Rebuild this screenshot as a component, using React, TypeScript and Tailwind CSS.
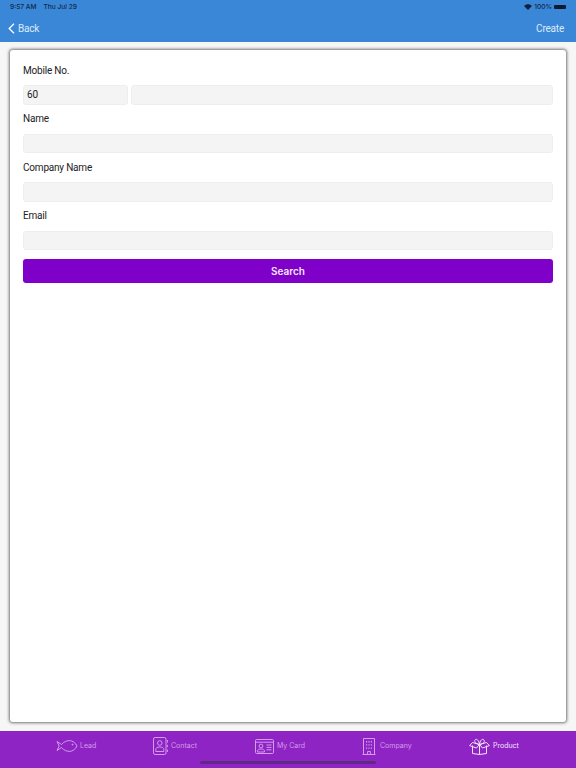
import React from 'react';

const fieldClass = 'h-[19.5px] rounded-[3px] border border-[#eeeeee] bg-[#f4f4f4] px-[3px] text-[10px] leading-[17px] text-[#222222]';

const Field: React.FC<{ label: string }> = ({ label }) => (
  <div className="mb-[4px]">
    <div className="mb-[5px] flex h-[20px] items-center text-[10px] tracking-[-0.2px] text-[#222222]">{label}</div>
    <div className={fieldClass} />
  </div>
);

const iconClass = 'fill-none stroke-current';

const LeadIcon = () => (
  <svg width="22" height="12" viewBox="0 0 22 12" className={iconClass} strokeWidth="1">
    <path d="M1 1.5 L5.5 4.5 C8 1.5 11 .6 13.5 .6 C16.5 .6 19.5 2.8 21 6 C19.5 9.2 16.5 11.4 13.5 11.4 C11 11.4 8 10.5 5.5 7.5 L1 10.5 L3.2 6 Z" />
    <circle cx="16.5" cy="4.6" r="0.5" className="fill-current" />
  </svg>
);

const ContactIcon = () => (
  <svg width="15" height="18" viewBox="0 0 15 18" className={iconClass} strokeWidth="1">
    <rect x="0.5" y="0.5" width="12.5" height="17" rx="1.6" />
    <circle cx="6.8" cy="6" r="2.3" />
    <path d="M2.8 14.5 V12.5 C2.8 10.8 4.2 10 6.8 10 C9.4 10 10.8 10.8 10.8 12.5 V14.5 Z" />
    <path d="M14.4 3 V5.5 M14.4 7.8 V10.2 M14.4 12.5 V15" />
  </svg>
);

const CardIcon = () => (
  <svg width="19" height="15" viewBox="0 0 19 15" className={iconClass} strokeWidth="1">
    <rect x="0.5" y="0.5" width="18" height="14" rx="1.2" />
    <path d="M0.5 3.2 H18.5" />
    <circle cx="6" cy="7" r="1.9" />
    <path d="M2.6 13 V11.8 C2.6 10.6 4 10 6 10 C8 10 9.4 10.6 9.4 11.8 V13 Z" />
    <path d="M11.5 6 H16.5 M11.5 8.4 H16.5 M11.5 10.8 H16.5" />
  </svg>
);

const CompanyIcon = () => (
  <svg width="14" height="17" viewBox="0 0 14 17" className={iconClass} strokeWidth="1">
    <path d="M0.5 16.5 H13.5 M1.5 16.5 V0.5 H12.5 V16.5" />
    <path d="M5.6 16.5 V13.5 H8.4 V16.5" />
    <path d="M4.6 3 V4.4 M7 3 V4.4 M9.4 3 V4.4 M4.6 6.2 V7.6 M7 6.2 V7.6 M9.4 6.2 V7.6 M4.6 9.4 V10.8 M7 9.4 V10.8 M9.4 9.4 V10.8" strokeWidth="1.2" />
  </svg>
);

const ProductIcon = () => (
  <svg width="21" height="17" viewBox="0 0 21 17" className={iconClass} strokeWidth="1">
    <path d="M3.5 7.5 V15.5 L10.5 16.5 L17.5 15.5 V7.5" />
    <path d="M10.5 6.5 V16.5" />
    <path d="M10.5 6.5 L3.5 4.5 L0.6 7.6 L7.5 10 Z M10.5 6.5 L17.5 4.5 L20.4 7.6 L13.5 10 Z" />
    <path d="M10.5 6.5 C6.5 6 5 3.5 6 2 C7.2 .4 9.8 1.6 10.5 6.5 C11.2 1.6 13.8 .4 15 2 C16 3.5 14.5 6 10.5 6.5 Z" />
  </svg>
);

const tabs = [
  { label: 'Lead', icon: <LeadIcon />, gap: 'gap-[2px]', active: false },
  { label: 'Contact', icon: <ContactIcon />, gap: 'gap-[3px]', active: false },
  { label: 'My Card', icon: <CardIcon />, gap: 'gap-[3px]', active: false },
  { label: 'Company', icon: <CompanyIcon />, gap: 'gap-[4px]', active: false },
  { label: 'Product', icon: <ProductIcon />, gap: 'gap-[3px]', active: true },
];

export default function App() {
  return (
    <div className="flex h-[768px] w-[576px] flex-col overflow-hidden bg-[#f6f6f6] font-['Roboto',sans-serif]">
      {/* nav bar with the status row on top */}
      <header className="h-[42px] shrink-0 bg-[#3a87d8] text-white">
        <div className="flex h-[14px] items-center justify-between pl-[10px] pr-[10px] pt-[1px] font-['Inter',sans-serif] text-[6.6px] font-medium text-[#10284a]">
          <div className="flex gap-[7px]">
            <span>9:57 AM</span>
            <span>Thu Jul 29</span>
          </div>
          <div className="flex items-center gap-[2px]">
            <svg width="8" height="6" viewBox="0 0 8 6" className="fill-[#0c2340]">
              <path d="M4 6 L0 2 C2.2 -.4 5.8 -.4 8 2 Z" />
            </svg>
            <span>100%</span>
            <div className="h-[4px] w-[12px] rounded-[1px] bg-[#0c1a30]" />
          </div>
        </div>
        <div className="flex h-[28px] items-center justify-between pl-[8px] pr-[12px] text-[10px] tracking-[-0.2px] text-[#dcebfb]">
          <div className="flex items-center gap-[3px]">
            <svg width="7" height="11" viewBox="0 0 7 11" className="fill-none stroke-white" strokeWidth="1.3">
              <path d="M6 .7 L1.2 5.5 L6 10.3" />
            </svg>
            <span>Back</span>
          </div>
          <span>Create</span>
        </div>
      </header>

      <main className="mx-[10px] mb-[9px] mt-[8px] flex-1 rounded-[3px] bg-white px-[13px] pt-[10px] shadow-[0_0_3px_1px_rgba(60,60,60,0.7)]">
        <div className="mb-[4px]">
          <div className="mb-[5px] flex h-[20px] items-center text-[10px] tracking-[-0.2px] text-[#222222]">Mobile No.</div>
          <div className="flex gap-[3px]">
            <div className={`${fieldClass} w-[105px]`}>60</div>
            <div className={`${fieldClass} flex-1`} />
          </div>
        </div>
        <Field label="Name" />
        <Field label="Company Name" />
        <Field label="Email" />
        <button className="mt-[9px] block h-[24px] w-full rounded-[3px] bg-[#7f00c8] font-['Inter',sans-serif] text-[10px] font-semibold text-[#f6e6fc]">
          Search
        </button>
      </main>

      {/* tab bar */}
      <nav className="relative grid h-[37px] shrink-0 grid-cols-[56px_97px_102px_107px_107px_1fr] items-start bg-[#8e24c4] pt-[6px] font-['Inter',sans-serif]">
        <div />
        {tabs.map((tab) => (
          <div
            key={tab.label}
            className={`flex h-[18px] items-center ${tab.gap} text-[7px] ${tab.active ? 'text-[#f6e4fb]' : 'text-[#d29ceb]'}`}
          >
            {tab.icon}
            <span>{tab.label}</span>
          </div>
        ))}
        <div className="absolute bottom-[4px] left-[200px] h-[3px] w-[176px] rounded-full bg-[#5f2a86]" />
      </nav>
    </div>
  );
}
